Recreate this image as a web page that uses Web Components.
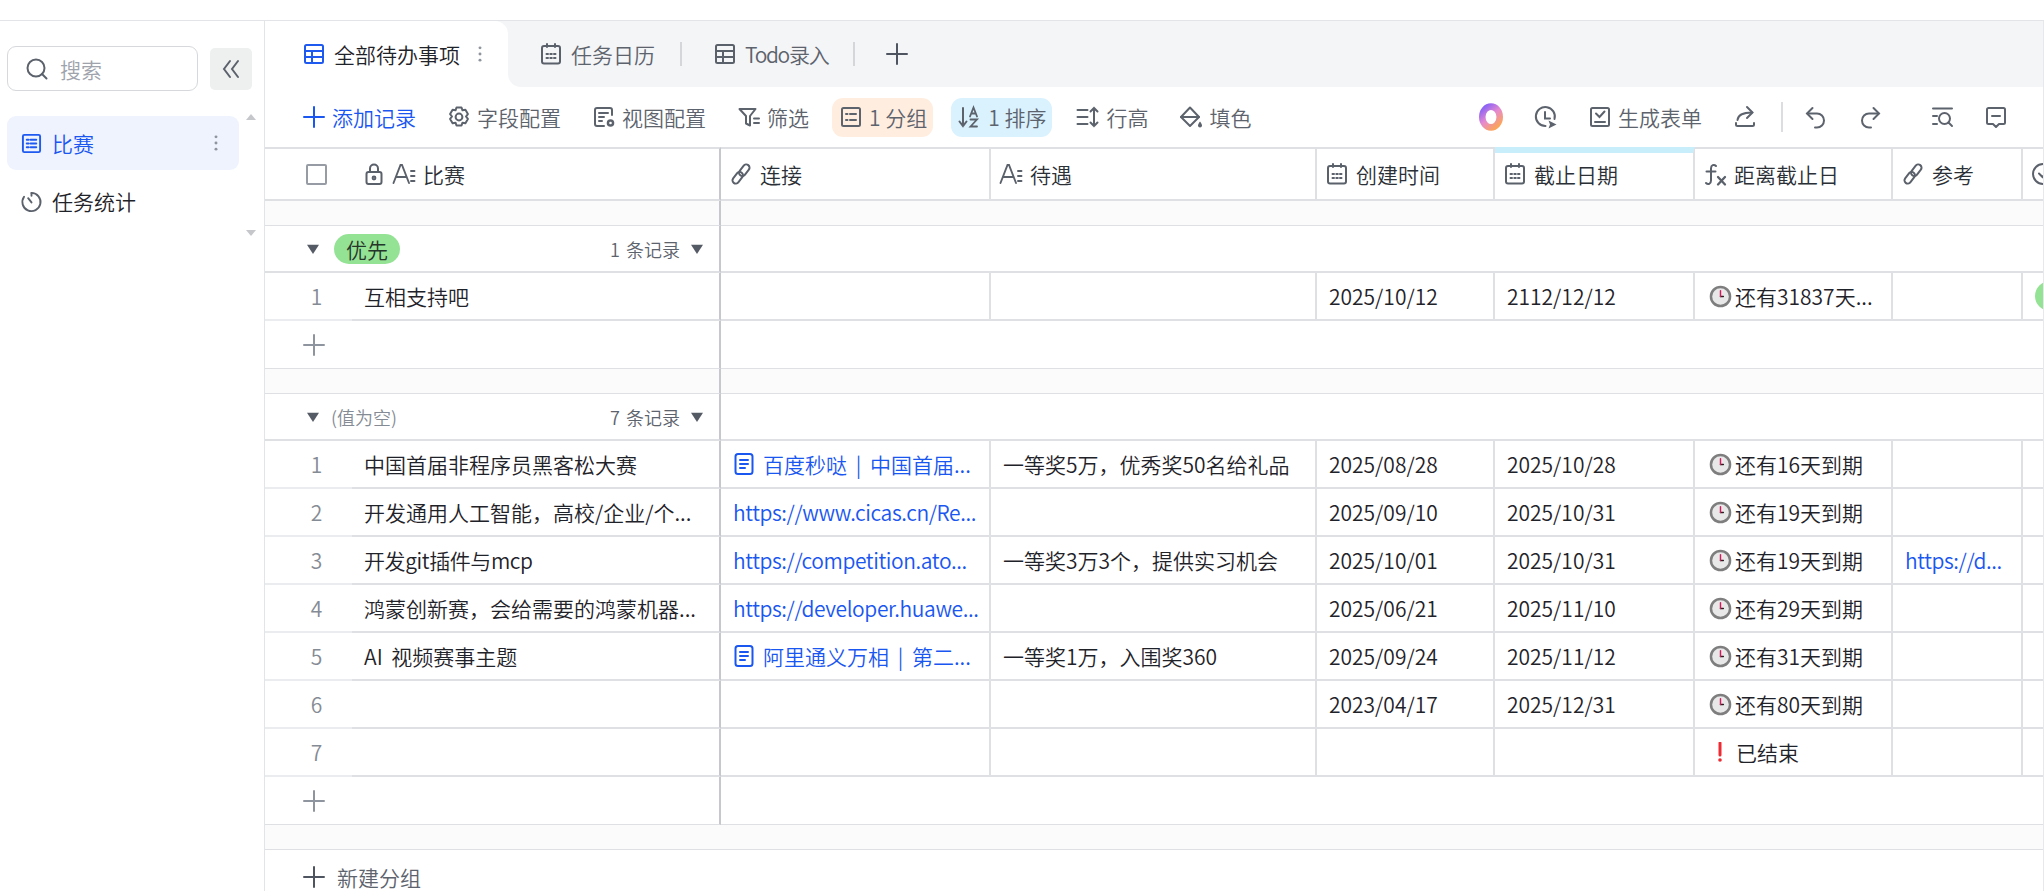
<!DOCTYPE html>
<html lang="zh">
<head>
<meta charset="utf-8">
<title>全部待办事项</title>
<style>
  html, body { margin: 0; height: 100%; overflow: hidden; background: #fff; }
  body { font: 350 21px "Noto Sans CJK SC", "Noto Sans", sans-serif; color: #1f2329; }
</style>
</head>
<body>
<todo-app>
  <side-bar slot="side">
    <side-item active icon="sheet" more>比赛</side-item>
    <side-item icon="stopwatch">任务统计</side-item>
  </side-bar>

  <view-tabs slot="tabs">
    <view-tab slot="active" active icon="table" more>全部待办事项</view-tab>
    <view-tab icon="calendar" sep>任务日历</view-tab>
    <view-tab icon="table" sep style="letter-spacing:-1.300px">Todo录入</view-tab>
    <ui-icon name="plus" style="margin-left:31px;color:#4e5561"></ui-icon>
  </view-tabs>

  <tool-bar slot="tools">
    <tool-btn tone="blue"><ui-icon name="plus"></ui-icon>添加记录</tool-btn>
    <tool-btn><ui-icon name="gear"></ui-icon>字段配置</tool-btn>
    <tool-btn><ui-icon name="viewcfg"></ui-icon>视图配置</tool-btn>
    <tool-btn><ui-icon name="filter"></ui-icon>筛选</tool-btn>
    <tool-btn pill="orange" style="margin-left:7px"><ui-icon name="list"></ui-icon>1 分组</tool-btn>
    <tool-btn pill="blue"><ui-icon name="sort"></ui-icon>1 排序</tool-btn>
    <tool-btn><ui-icon name="rowheight"></ui-icon>行高</tool-btn>
    <tool-btn><ui-icon name="fill"></ui-icon>填色</tool-btn>

    <tool-btn slot="end"><ui-icon name="ring" size="24"></ui-icon></tool-btn>
    <tool-btn slot="end"><ui-icon name="history"></ui-icon></tool-btn>
    <tool-btn slot="end"><ui-icon name="form"></ui-icon>生成表单</tool-btn>
    <tool-btn slot="end"><ui-icon name="share"></ui-icon></tool-btn>
    <tool-sep slot="end"></tool-sep>
    <tool-btn slot="end"><ui-icon name="undo"></ui-icon></tool-btn>
    <tool-btn slot="end"><ui-icon name="redo"></ui-icon></tool-btn>
    <tool-btn slot="end" style="margin-left:18px"><ui-icon name="searchlist"></ui-icon></tool-btn>
    <tool-btn slot="end"><ui-icon name="comment"></ui-icon></tool-btn>
  </tool-bar>

  <grid-table slot="grid">
    <grid-row kind="head">
      <grid-cell kind="check"><check-box></check-box></grid-cell>
      <grid-cell kind="head" divider style="padding-left:11px"><ui-icon name="lock"></ui-icon><ui-icon name="text"></ui-icon>比赛</grid-cell>
      <grid-cell kind="head"><ui-icon name="link"></ui-icon>连接</grid-cell>
      <grid-cell kind="head"><ui-icon name="text"></ui-icon>待遇</grid-cell>
      <grid-cell kind="head"><ui-icon name="calendar"></ui-icon>创建时间</grid-cell>
      <grid-cell kind="head" accent><ui-icon name="calendar"></ui-icon>截止日期</grid-cell>
      <grid-cell kind="head"><ui-icon name="fx"></ui-icon>距离截止日</grid-cell>
      <grid-cell kind="head"><ui-icon name="link"></ui-icon>参考</grid-cell>
      <grid-cell kind="head" last><ui-icon name="checkcircle"></ui-icon></grid-cell>
    </grid-row>

    <grid-row kind="band"><grid-cell span="left" divider></grid-cell><grid-cell span="right"></grid-cell></grid-row>

    <grid-row kind="group">
      <grid-cell span="left" divider><group-head count="1 条记录"><tag-pill>优先</tag-pill></group-head></grid-cell>
      <grid-cell span="right"></grid-cell>
    </grid-row>
    <grid-row>
      <grid-cell kind="num">1</grid-cell>
      <grid-cell divider>互相支持吧</grid-cell>
      <grid-cell></grid-cell>
      <grid-cell></grid-cell>
      <grid-cell>2025/10/12</grid-cell>
      <grid-cell>2112/12/12</grid-cell>
      <grid-cell><due-text>还有31837天...</due-text></grid-cell>
      <grid-cell></grid-cell>
      <grid-cell last><tag-pill></tag-pill></grid-cell>
    </grid-row>
    <grid-row kind="add"><grid-cell span="left" divider kind="add"><ui-icon name="plus"></ui-icon></grid-cell><grid-cell span="right"></grid-cell></grid-row>

    <grid-row kind="band"><grid-cell span="left" divider></grid-cell><grid-cell span="right"></grid-cell></grid-row>

    <grid-row kind="group">
      <grid-cell span="left" divider><group-head count="7 条记录" empty>(值为空)</group-head></grid-cell>
      <grid-cell span="right"></grid-cell>
    </grid-row>
    <grid-row>
      <grid-cell kind="num">1</grid-cell>
      <grid-cell divider>中国首届非程序员黑客松大赛</grid-cell>
      <grid-cell tone="link"><ui-icon name="doc"></ui-icon>百度秒哒 | 中国首届...</grid-cell>
      <grid-cell>一等奖5万，优秀奖50名给礼品</grid-cell>
      <grid-cell>2025/08/28</grid-cell>
      <grid-cell>2025/10/28</grid-cell>
      <grid-cell><due-text>还有16天到期</due-text></grid-cell>
      <grid-cell></grid-cell>
      <grid-cell last></grid-cell>
    </grid-row>
    <grid-row>
      <grid-cell kind="num">2</grid-cell>
      <grid-cell divider>开发通用人工智能，高校/企业/个...</grid-cell>
      <grid-cell tone="url">https://www.cicas.cn/Re...</grid-cell>
      <grid-cell></grid-cell>
      <grid-cell>2025/09/10</grid-cell>
      <grid-cell>2025/10/31</grid-cell>
      <grid-cell><due-text>还有19天到期</due-text></grid-cell>
      <grid-cell></grid-cell>
      <grid-cell last></grid-cell>
    </grid-row>
    <grid-row>
      <grid-cell kind="num">3</grid-cell>
      <grid-cell divider style="letter-spacing:-.400px">开发git插件与mcp</grid-cell>
      <grid-cell tone="url">https://competition.ato...</grid-cell>
      <grid-cell>一等奖3万3个，提供实习机会</grid-cell>
      <grid-cell>2025/10/01</grid-cell>
      <grid-cell>2025/10/31</grid-cell>
      <grid-cell><due-text>还有19天到期</due-text></grid-cell>
      <grid-cell tone="url">https://d...</grid-cell>
      <grid-cell last></grid-cell>
    </grid-row>
    <grid-row>
      <grid-cell kind="num">4</grid-cell>
      <grid-cell divider>鸿蒙创新赛，会给需要的鸿蒙机器...</grid-cell>
      <grid-cell tone="url">https://developer.huawe...</grid-cell>
      <grid-cell></grid-cell>
      <grid-cell>2025/06/21</grid-cell>
      <grid-cell>2025/11/10</grid-cell>
      <grid-cell><due-text>还有29天到期</due-text></grid-cell>
      <grid-cell></grid-cell>
      <grid-cell last></grid-cell>
    </grid-row>
    <grid-row>
      <grid-cell kind="num">5</grid-cell>
      <grid-cell divider style="word-spacing:4px">AI 视频赛事主题</grid-cell>
      <grid-cell tone="link"><ui-icon name="doc"></ui-icon>阿里通义万相 | 第二...</grid-cell>
      <grid-cell>一等奖1万，入围奖360</grid-cell>
      <grid-cell>2025/09/24</grid-cell>
      <grid-cell>2025/11/12</grid-cell>
      <grid-cell><due-text>还有31天到期</due-text></grid-cell>
      <grid-cell></grid-cell>
      <grid-cell last></grid-cell>
    </grid-row>
    <grid-row>
      <grid-cell kind="num">6</grid-cell>
      <grid-cell divider></grid-cell>
      <grid-cell></grid-cell>
      <grid-cell></grid-cell>
      <grid-cell>2023/04/17</grid-cell>
      <grid-cell>2025/12/31</grid-cell>
      <grid-cell><due-text>还有80天到期</due-text></grid-cell>
      <grid-cell></grid-cell>
      <grid-cell last></grid-cell>
    </grid-row>
    <grid-row>
      <grid-cell kind="num">7</grid-cell>
      <grid-cell divider></grid-cell>
      <grid-cell></grid-cell>
      <grid-cell></grid-cell>
      <grid-cell></grid-cell>
      <grid-cell></grid-cell>
      <grid-cell><due-text ended>已结束</due-text></grid-cell>
      <grid-cell></grid-cell>
      <grid-cell last></grid-cell>
    </grid-row>
    <grid-row kind="add"><grid-cell span="left" divider kind="add"><ui-icon name="plus"></ui-icon></grid-cell><grid-cell span="right"></grid-cell></grid-row>

    <grid-row kind="band"><grid-cell span="all"></grid-cell></grid-row>
    <new-group>新建分组</new-group>
  </grid-table>
</todo-app>

<script>
const ICONS = {
  plus: '<path d="M12 2v20M2 12h20"/>',
  table: '<rect x="3" y="3" width="18" height="18" rx="1.5"/><path d="M3 9h18M3 15h18M10 9v12"/>',
  sheet: '<rect x="3" y="3" width="18" height="18" rx="1.5"/><path d="M7 8h2M11 8h6M7 12h2M11 12h6M7 16h2M11 16h6"/>',
  calendar: '<rect x="3" y="4" width="18" height="17.5" rx="2"/><path d="M8 2v3M16 2v3M7.5 12h1.5M11.3 12h1.5M15 12h1.5M7.5 16h1.5M11.3 16h1.5M15 16h1.5"/>',
  stopwatch: '<path d="M12 3a9.5 9.5 0 1 1-7.8 4"/><path d="M12 3v3M8.5 8.5l3.5 4.5"/>',
  search: '<circle cx="11" cy="11" r="8.5"/><path d="M17 17l4.5 4.5"/>',
  collapse: '<path d="M11 4l-6 8 6 8M19 4l-6 8 6 8"/>',
  dots: '<g fill="currentColor" stroke="none"><circle cx="12" cy="4.5" r="1.8"/><circle cx="12" cy="12" r="1.8"/><circle cx="12" cy="19.5" r="1.8"/></g>',
  lock: '<rect x="4.5" y="10" width="15" height="12" rx="2"/><path d="M8 10V6.5a4 4 0 0 1 8 0V10"/><circle cx="12" cy="16" r="1.4"/>',
  text: '<path d="M1.5 21L8.5 3h1.5l7 18M4.5 15h10M19 9h3.5M19 14h3.5M19 19h3.5" stroke-width="1.9"/>',
  gear: '<path d="M9.500 2.500h5l1 2.800 2.900-.5 2.500 4.300-1.900 2.400 1.900 2.400-2.500 4.300-2.900-.5-1 2.800h-5l-1-2.800-2.900.5-2.500-4.300 1.900-2.400-1.900-2.400 2.500-4.300 2.900.5z" stroke-linejoin="round"/><circle cx="12" cy="12" r="3.400"/>',
  viewcfg: '<path d="M20 10V5a2 2 0 0 0-2-2H5a2 2 0 0 0-2 2v14a2 2 0 0 0 2 2h7"/><path d="M7 8h9M7 12h5M7 16h3"/><circle cx="18.5" cy="18" r="3.8" fill="currentColor" stroke="none"/><circle cx="18.5" cy="18" r="1.3" fill="#fff" stroke="none"/>',
  filter: '<path d="M2.5 4h16l-5.5 7v9.5l-4-2V11z" stroke-linejoin="round"/><path d="M17 13.5h5M17 18h5"/>',
  list: '<rect x="3" y="3" width="18" height="18" rx="1.5"/><path d="M7 9h1.5M11 9h6M7 15h1.5M11 15h6"/>',
  sort: '<path d="M5 3v18M1.5 16.5L5 21l3.5-4.5"/><path d="M12 11.5l3.5-9 3.5 9M13.2 8.5h4.6M12.5 14.5h6.5l-6.5 7h6.5" stroke-width="1.8"/>',
  rowheight: '<path d="M1.5 5h10M1.5 12h10M1.5 19h10M18 3v18M14.5 6.5L18 3l3.5 3.5M14.5 17.5L18 21l3.5-3.5"/>',
  fill: '<path d="M11 2.5l9 9.5-9 9-9-9z" stroke-linejoin="round"/><path d="M2 12h18"/><path d="M21 16.5c1.5 2 2 3 2 4a2 2 0 0 1-4 0c0-1 .5-2 2-4z" fill="currentColor" stroke="none"/>',
  history: '<path d="M20.5 14A9.5 9.5 0 1 0 11.5 21"/><path d="M11 7v6.5h5"/><path d="M14.5 15.5l8 4-8 4 1.5-4z" fill="currentColor" stroke="none"/>',
  form: '<rect x="3" y="3" width="18" height="18" rx="1.5"/><path d="M8 8.5l3.5 3.5 5-5.5M7 17h10"/>',
  share: '<path d="M4.5 15C5 10 9 7.5 19 7.5"/><path d="M14 2l5.5 5.5L14 13"/><path d="M3 18v1.5a1.5 1.5 0 0 0 1.5 1.5h15a1.5 1.5 0 0 0 1.5-1.5V18"/>',
  undo: '<path d="M8.5 3L3 8.5 8.5 14"/><path d="M3.5 8.5H13a7 7 0 0 1 0 14h-2"/>',
  redo: '<path d="M15.5 3L21 8.5 15.5 14"/><path d="M20.5 8.5H11a7 7 0 0 0 0 14h2"/>',
  searchlist: '<path d="M3 3.5h19M3 11h4M3 19h4"/><circle cx="14.5" cy="13.5" r="5.5"/><path d="M18.5 17.5l3.5 3.5"/>',
  comment: '<path d="M4.5 3h15A1.5 1.5 0 0 1 21 4.5v13a1.5 1.5 0 0 1-1.5 1.5H15l-3 3-3-3H4.5A1.5 1.5 0 0 1 3 17.500v-13A1.500 1.500 0 0 1 4.500 3z" stroke-linejoin="round"/><path d="M8 11h8"/>',
  link: '<rect x="9" y="0.5" width="6.500" height="13" rx="3.250" transform="rotate(38 12 12)"/><rect x="8.500" y="10.500" width="6.500" height="13" rx="3.250" transform="rotate(38 12 12)"/>',
  fx: '<path d="M13 4C11 2 8 3 8 6.500v12C8 22 5 23 3 21M3.500 9.500h9"/><path d="M15 15l7 7.500M22 15l-7 7.500" stroke-width="2.300"/>',
  doc: '<path d="M6 2h12a2.500 2.500 0 0 1 2.500 2.500v15A2.500 2.500 0 0 1 18 22H6a2.500 2.500 0 0 1-2.500-2.500v-15A2.500 2.500 0 0 1 6 2z"/><path d="M8 8h8M8 12h8M8 16h5"/>',
  checkcircle: '<circle cx="12" cy="12" r="10"/><path d="M8 11.500l3.500 3.500 5-5"/>',
  caret: '<path d="M1 4h22L12 21z" fill="currentColor" stroke="none"/>',
  ring: '<defs><linearGradient id="g" x1="0.100" y1="0" x2="0.800" y2="1"><stop offset="0" stop-color="#8a63f5"/><stop offset="0.500" stop-color="#e68ad0"/><stop offset="1" stop-color="#fba45c"/></linearGradient></defs><ellipse cx="12" cy="12" rx="8" ry="9.500" stroke="url(#g)" stroke-width="6"/>',
  clockface: '<circle cx="12" cy="12" r="10" fill="#e8e8e8" stroke="#7e7e7e" stroke-width="2.600"/><path d="M12 12h3" stroke="#222" stroke-width="1.500"/><path d="M12 12V6" stroke="#d5175c" stroke-width="1.500"/>'
};

// tiny helper so every element below stays a few lines
function shadow(el, html) {
  el.attachShadow({ mode: "open" }).innerHTML = html;
}

class UiIcon extends HTMLElement {
  connectedCallback() {
    if (this.shadowRoot) return;
    const size = this.getAttribute("size") || 22;
    shadow(this, `
      <style>
        :host { display: inline-flex; flex: none; width: ${size}px; height: ${size}px; }
        svg { width: 100%; height: 100%; display: block; overflow: visible; }
      </style>
      <svg viewBox="1 1 22 22" fill="none" stroke="currentColor" stroke-width="2" stroke-linecap="round">${ICONS[this.getAttribute("name")] || ""}</svg>`);
  }
}
customElements.define("ui-icon", UiIcon);

class TodoApp extends HTMLElement {
  constructor() {
    super();
    shadow(this, `
      <style>
        :host { display: grid; grid-template-columns: 265px 1fr; grid-template-rows: 21px 891px; height: 891px; overflow: hidden; }
        .strip { grid-column: 1 / -1; background: #fff; border-bottom: 1px solid #e3e4e8; }
        .main { min-width: 0; display: flex; flex-direction: column; border-right: 1px solid #e7e8ec; overflow: hidden; }
      </style>
      <div class="strip"></div>
      <slot name="side"></slot>
      <div class="main">
        <slot name="tabs"></slot>
        <slot name="tools"></slot>
        <slot name="grid"></slot>
      </div>`);
  }
}
customElements.define("todo-app", TodoApp);

class SideBar extends HTMLElement {
  constructor() {
    super();
    shadow(this, `
      <style>
        :host { display: block; box-sizing: border-box; border-right: 1px solid #e3e4e8; padding: 25px 0 0 7px; background: #fff; }
        .search-row { display: flex; align-items: center; gap: 12px; height: 45px; }
        .search { box-sizing: border-box; width: 191px; height: 45px; border: 1.5px solid #d6d8dc; border-radius: 9px; display: flex; align-items: center; gap: 12px; padding-left: 18px; color: #9ea3ac; }
        .search ui-icon { color: #5c626c; }
        .fold { width: 42px; height: 42px; border-radius: 5px; background: #eef0f0; color: #5c626c; display: flex; align-items: center; justify-content: center; }
        .body { display: flex; margin-top: 23px; }
        .items { display: flex; flex-direction: column; gap: 4px; padding-top: 2px; width: 232px; }
        .track { display: flex; flex-direction: column; justify-content: space-between; height: 122px; margin-left: 7px; color: #c5c7cb; }
        .arr { width: 0; height: 0; border-left: 5.500px solid transparent; border-right: 5.500px solid transparent; }
        .up { border-bottom: 6px solid currentColor; }
        .down { border-top: 6px solid currentColor; }
      </style>
      <div class="search-row">
        <div class="search"><ui-icon name="search"></ui-icon>搜索</div>
        <div class="fold"><ui-icon name="collapse"></ui-icon></div>
      </div>
      <div class="body">
        <div class="items"><slot></slot></div>
        <div class="track"><i class="arr up"></i><i class="arr down"></i></div>
      </div>`);
  }
}
customElements.define("side-bar", SideBar);

class SideItem extends HTMLElement {
  connectedCallback() {
    if (this.shadowRoot) return;
    const more = this.hasAttribute("more") ? '<ui-icon class="more" name="dots" size="18"></ui-icon>' : "";
    shadow(this, `
      <style>
        :host { display: flex; align-items: center; gap: 10px; height: 54px; padding: 0 14px; border-radius: 9px; color: #1f2329; }
        :host([active]) { background: #eff3fe; color: #1a56f0; }
        ui-icon { color: #5c626c; }
        :host([active]) ui-icon:not(.more) { color: #1f5af0; }
        .more { margin-left: auto; color: #8f959e; }
      </style>
      <ui-icon name="${this.getAttribute("icon")}" size="21"></ui-icon><slot></slot>${more}`);
  }
}
customElements.define("side-item", SideItem);

class ViewTabs extends HTMLElement {
  constructor() {
    super();
    shadow(this, `
      <style>
        :host { display: flex; height: 66px; background: linear-gradient(#f4f5f7 50%, #fff 50%); flex: none; }
        .rest { flex: 1; display: flex; align-items: center; background: #f4f5f7; border-bottom-left-radius: 13px; }
      </style>
      <slot name="active"></slot>
      <div class="rest"><slot></slot></div>`);
  }
}
customElements.define("view-tabs", ViewTabs);

class ViewTab extends HTMLElement {
  connectedCallback() {
    if (this.shadowRoot) return;
    const tail = this.hasAttribute("more") ? '<ui-icon class="more" name="dots" size="18"></ui-icon>'
      : this.hasAttribute("sep") ? '<i class="sep"></i>' : "";
    shadow(this, `
      <style>
        :host { display: flex; align-items: center; gap: 9px; height: 66px; box-sizing: border-box; color: #5d636d; padding-left: 32px; }
        :host([active]) { width: 243px; padding-left: 38px; background: #fff; color: #1f2329; border-top-right-radius: 13px; }
        ui-icon { color: #5b616b; }
        :host([active]) ui-icon:not(.more) { color: #1f5af0; }
        .more { margin-left: 2px; color: #8f959e; }
        .sep { width: 2px; height: 24px; background: #d4d6da; margin-left: 16px; margin-top:-1px; }
      </style>
      <ui-icon name="${this.getAttribute("icon")}"></ui-icon><slot></slot>${tail}`);
  }
}
customElements.define("view-tab", ViewTab);

class ToolBar extends HTMLElement {
  constructor() {
    super();
    shadow(this, `
      <style>
        :host { display: flex; align-items: center; flex: none; height: 60px; padding: 0 20px 0 22px; box-sizing: border-box; }
        .end { margin-left: auto; display: flex; align-items: center; }
        .start { display: flex; align-items: center; }
      </style>
      <div class="start"><slot></slot></div>
      <div class="end"><slot name="end"></slot></div>`);
  }
}
customElements.define("tool-bar", ToolBar);

class ToolBtn extends HTMLElement {
  constructor() {
    super();
    shadow(this, `
      <style>
        :host { display: inline-flex; align-items: center; gap: 7px; height: 39px; padding: 0 16px; color: #5d636d; white-space: nowrap; }
        :host([tone=blue]) { color: #1a56f0; }
        :host([pill]) { padding: 0 6px 0 8px; margin: 0 9px; border-radius: 11px; }
        :host([pill=orange]) { background: #ffeee0; }
        :host([pill=blue]) { background: #d9f2fe; }
      </style>
      <slot></slot>`);
  }
}
customElements.define("tool-btn", ToolBtn);

class ToolSep extends HTMLElement {
  constructor() {
    super();
    shadow(this, `<style>:host { display: block; width: 2px; height: 30px; background: #dcdde0; margin: 0 6px 0 9px; }</style>`);
  }
}
customElements.define("tool-sep", ToolSep);

class GridTable extends HTMLElement {
  constructor() {
    super();
    shadow(this, `
      <style>
        :host { display: block; flex: 1; min-height: 0; overflow: hidden; --cols: 87px 369px 270px 326px 178px 200px 198px 130px 22px; --line: #dfe0e4; }
      </style>
      <slot></slot>`);
  }
}
customElements.define("grid-table", GridTable);

class GridRow extends HTMLElement {
  constructor() {
    super();
    shadow(this, `
      <style>
        :host { display: grid; grid-template-columns: var(--cols); height: 48px; --bw: 2px; }
        :host([kind=head]) { height: 54px; }
        :host([kind=band]) { height: 25px; --bw: 1px; --cell-bg: #fbfbfc; }
        :host([kind=group]) { height: 47px; }
        :host([kind=add]) { --bw: 1px; }
      </style>
      <slot></slot>`);
  }
}
customElements.define("grid-row", GridRow);

class GridCell extends HTMLElement {
  constructor() {
    super();
    shadow(this, `
      <style>
        :host { display: flex; align-items: center; min-width: 0; box-sizing: border-box; overflow: hidden; white-space: nowrap; padding: 0 0 0 12px;
          background: var(--cell-bg, #fff); border-bottom: var(--bw) solid var(--line); border-right: 2px solid var(--line); color: #1f2329; }
        :host([span]) { border-right: 0; padding: 0; }
        :host([span=left]) { grid-column: 1 / 3; }
        :host([span=right]) { grid-column: 3 / -1; }
        :host([span=all]) { grid-column: 1 / -1; }
        :host([divider]) { border-right: 2px solid #c6c8ce; }
        :host([last]) { border-right: 0; }
        :host([kind=num]) { border-right: 0; border-bottom-color: #ebecef; justify-content: center; padding: 0 0 0 16px; color: #858b94; }
        :host([kind=check]), :host([kind=head]) { border-top: 2px solid var(--line); }
        :host([kind=check]) { border-right: 0; padding-left: 41px; }
        :host([kind=head]) { gap: 8px; padding-left: 9px; color: #2b2f36; }
        :host([kind=head]) ::slotted(ui-icon) { color: #5b616b; }
        :host([accent]) { border-top: 6px solid #c9eefb; padding-bottom: 4px; }
        :host([kind=add]) { padding-left: 38px; color: #8f959e; }
        :host([tone=link]) { color: #1a56f0; gap: 8px; word-spacing: 4px; }
        :host([tone=url]) { color: #1a56f0; letter-spacing: -.400px; }
      </style>
      <slot></slot>`);
  }
}
customElements.define("grid-cell", GridCell);

class GroupHead extends HTMLElement {
  connectedCallback() {
    if (this.shadowRoot) return;
    shadow(this, `
      <style>
        :host { display: flex; align-items: center; width: 100%; padding: 0 16px 0 42px; box-sizing: border-box; }
        .caret { color: #555b65; }
        .name { display: flex; align-items: center; margin-left: 15px; }
        :host([empty]) .name { margin-left: 12px; font-size: 18px; color: #858b94; }
        .count { margin-left: auto; font-size: 18px; word-spacing: 2px; color: #5d636d; margin-right: 11px; }
      </style>
      <ui-icon class="caret" name="caret" size="12"></ui-icon>
      <span class="name"><slot></slot></span>
      <span class="count">${this.getAttribute("count")}</span>
      <ui-icon class="caret" name="caret" size="12"></ui-icon>`);
  }
}
customElements.define("group-head", GroupHead);

class TagPill extends HTMLElement {
  constructor() {
    super();
    shadow(this, `
      <style>
        :host { display: inline-flex; align-items: center; justify-content: center; flex: none; min-width: 66px; height: 30px; box-sizing: border-box; border-radius: 15px; background: #94e294; color: #26352a; }
      </style>
      <slot></slot>`);
  }
}
customElements.define("tag-pill", TagPill);

class CheckBox extends HTMLElement {
  constructor() {
    super();
    shadow(this, `<style>:host { display: block; width: 21px; height: 21px; box-sizing: border-box; border: 2px solid #969ba4; border-radius: 2px; background: #fff; }</style>`);
  }
}
customElements.define("check-box", CheckBox);

class DueText extends HTMLElement {
  connectedCallback() {
    if (this.shadowRoot) return;
    const mark = this.hasAttribute("ended")
      ? '<svg class="bang" viewBox="0 0 6 20" width="6" height="20"><path d="M3 1v12" stroke="#ee2a33" stroke-width="3" stroke-linecap="round"/><circle cx="3" cy="18" r="1.800" fill="#ee2a33"/></svg>'
      : '<ui-icon name="clockface" size="21"></ui-icon>';
    shadow(this, `
      <style>
        :host { display: flex; align-items: center; padding-left: 3px; gap: 4px; }
        :host([ended]) { gap: 13px; padding-left: 10px; }
      </style>
      ${mark}<slot></slot>`);
  }
}
customElements.define("due-text", DueText);

class NewGroup extends HTMLElement {
  constructor() {
    super();
    shadow(this, `
      <style>
        :host { display: flex; align-items: center; gap: 12px; height: 54px; padding-left: 38px; color: #5d636d; }
        ui-icon { color: #4e5561; }
      </style>
      <ui-icon name="plus"></ui-icon><slot></slot>`);
  }
}
customElements.define("new-group", NewGroup);
</script>
</body>
</html>
